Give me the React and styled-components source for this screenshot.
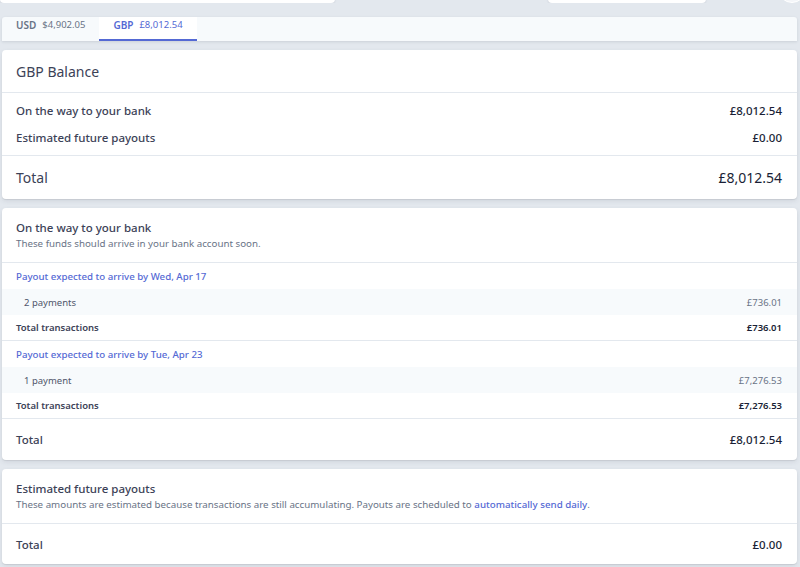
import React from 'react'
import styled, { createGlobalStyle } from 'styled-components'

const GlobalStyle = createGlobalStyle`
	html, body {
		margin: 0;
		background: #e3e8ee;
	}
	body {
		font-family: 'Noto Sans', 'Open Sans', sans-serif;
		color: #3c4257;
		-webkit-font-smoothing: antialiased;
	}
`

const Page = styled.div`
	padding: 0 3px 8px 2px;
`

const TopBar = styled.div`
	height: 3px;
	overflow: hidden;
	display: flex;
	align-items: flex-end;
	margin-left: -2px;
	margin-right: -3px;
`

const SearchBox = styled.div`
	width: 335px;
	height: 28px;
	flex: none;
	background: #fff;
	border-radius: 4px;
	box-shadow: 0 1px 2px rgba(60, 66, 87, 0.12);
`

const HeaderButton = styled.div`
	width: 158px;
	height: 28px;
	flex: none;
	margin-left: auto;
	background: #fff;
	border-radius: 4px;
	box-shadow: 0 1px 2px rgba(60, 66, 87, 0.12);
`

const Avatar = styled.div`
	width: 26px;
	height: 26px;
	flex: none;
	margin-left: 72px;
	margin-right: -6px;
	border-radius: 50%;
	background: #f4f6f9;
	border: 1px solid #fff;
`

const TabBar = styled.div`
	margin-top: 14px;
	height: 24px;
	display: flex;
	background: #f7fafc;
	border-radius: 3px 3px 0 0;
	box-shadow: 0 1px 3px rgba(60, 66, 87, 0.14);
`

const Tab = styled.div`
	display: flex;
	gap: 6px;
	padding: 1px 14px 0;
	font-size: 9.5px;
	line-height: 14px;
	box-sizing: border-box;
	height: 24px;
	background: ${({ active }) => (active ? '#fff' : 'transparent')};
	color: ${({ active }) => (active ? '#5469d4' : '#697386')};
	border-bottom: 2px solid ${({ active }) => (active ? '#5469d4' : 'transparent')};
`

const TabCode = styled.span`
	font-weight: 600;
	font-size: 10px;
`

const Card = styled.div`
	margin-top: 9px;
	background: #fff;
	border-radius: 4px;
	box-shadow: 0 2px 5px rgba(60, 66, 87, 0.1), 0 1px 1px rgba(0, 0, 0, 0.08);
	overflow: hidden;
`

const CardHeader = styled.div`
	padding: 0 15px 0 14px;
	height: 42px;
	display: flex;
	align-items: center;
	font-size: 14px;
	color: #3c4257;
	border-bottom: 1px solid #e3e8ee;
`

const SectionHeader = styled.div`
	padding: 12px 15px 11px 14px;
	border-bottom: 1px solid #e3e8ee;
`

const SectionTitle = styled.div`
	font-size: 11.5px;
	line-height: 16px;
	font-weight: 500;
	color: #3c4257;
`

const SectionText = styled.div`
	font-size: 9.75px;
	line-height: 15px;
	color: #697386;
`

const Link = styled.a`
	color: #5469d4;
	font-weight: 500;
	text-decoration: none;
`

const Rows = styled.div`
	padding: 4px 0;
	border-bottom: 1px solid #e3e8ee;
`

const Row = styled.div`
	display: flex;
	justify-content: space-between;
	align-items: center;
	height: ${({ h }) => h || 26}px;
	padding: 0 15px 0 ${({ indent }) => (indent ? '22px' : '14px')};
	font-size: ${({ size }) => size || 9.5}px;
	font-weight: ${({ weight }) => weight || 400};
	color: ${({ tone }) => tone || '#3c4257'};
	background: ${({ shaded }) => (shaded ? '#f7fafc' : 'transparent')};
	border-bottom: ${({ divided }) => (divided ? '1px solid #e3e8ee' : 'none')};
	box-sizing: border-box;
`

const Amount = styled.span`
	color: ${({ tone }) => tone || '#1a1f36'};
`

const payouts = [
	{ date: 'Wed, Apr 17', count: '2 payments', amount: '£736.01' },
	{ date: 'Tue, Apr 23', count: '1 payment', amount: '£7,276.53' },
]

const App = () => {
	return (
		<>
			<GlobalStyle />
			<Page>
				<TopBar>
					<SearchBox />
					<HeaderButton />
					<Avatar />
				</TopBar>

				<TabBar>
					<Tab>
						<TabCode>USD</TabCode>
						<span>$4,902.05</span>
					</Tab>
					<Tab active>
						<TabCode>GBP</TabCode>
						<span>£8,012.54</span>
					</Tab>
				</TabBar>

				<Card>
					<CardHeader>GBP Balance</CardHeader>
					<Rows>
						<Row h={27} size={11.5} weight={500}>
							<span>On the way to your bank</span>
							<Amount>£8,012.54</Amount>
						</Row>
						<Row h={27} size={11.5} weight={500}>
							<span>Estimated future payouts</span>
							<Amount>£0.00</Amount>
						</Row>
					</Rows>
					<Row h={43} size={14}>
						<span>Total</span>
						<Amount>£8,012.54</Amount>
					</Row>
				</Card>

				<Card>
					<SectionHeader>
						<SectionTitle>On the way to your bank</SectionTitle>
						<SectionText>These funds should arrive in your bank account soon.</SectionText>
					</SectionHeader>
					{payouts.map((p) => (
						<React.Fragment key={p.date}>
							<Row size={9.7} weight={500} tone='#5469d4'>
								<span>Payout expected to arrive by {p.date}</span>
							</Row>
							<Row indent shaded tone='#4f566b'>
								<span>{p.count}</span>
								<Amount tone='#697386'>{p.amount}</Amount>
							</Row>
							<Row weight={600} divided>
								<span>Total transactions</span>
								<Amount>{p.amount}</Amount>
							</Row>
						</React.Fragment>
					))}
					<Row h={41} size={11.5} weight={500}>
						<span>Total</span>
						<Amount>£8,012.54</Amount>
					</Row>
				</Card>

				<Card>
					<SectionHeader>
						<SectionTitle>Estimated future payouts</SectionTitle>
						<SectionText>
							These amounts are estimated because transactions are still accumulating. Payouts are
							scheduled to <Link href='#'>automatically send daily</Link>.
						</SectionText>
					</SectionHeader>
					<Row h={40} size={11.5} weight={500}>
						<span>Total</span>
						<Amount>£0.00</Amount>
					</Row>
				</Card>
			</Page>
		</>
	)
}

export default App
